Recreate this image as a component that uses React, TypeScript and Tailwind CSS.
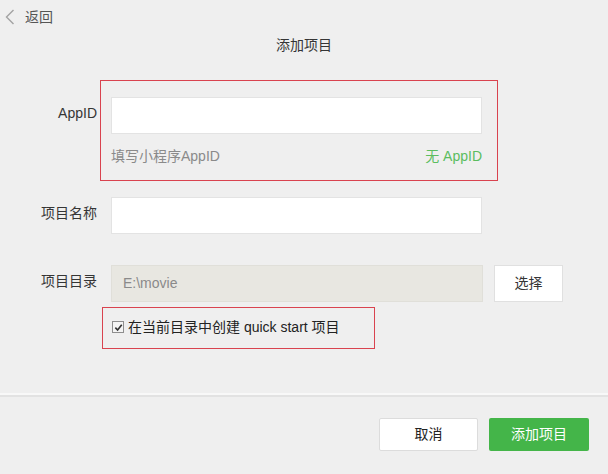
const font = "font-['Liberation_Sans','Noto_Sans_CJK_SC',sans-serif]";

function Field({ label, children }: { label: string; children: React.ReactNode }) {
  return (
    <div className="flex items-start">
      <div className="w-[97px] shrink-0 pt-[6px] text-right text-[14px] leading-[20px] text-[#353535]">
        {label}
      </div>
      <div className="ml-[14px]">{children}</div>
    </div>
  );
}

export default function App() {
  return (
    <div className={`w-[608px] h-[474px] bg-[#efefef] flex flex-col ${font}`}>
      {/* Back */}
      <div className="h-[34px] flex items-center pl-[5px]">
        <svg viewBox="0 0 10 16" className="w-[10px] h-[16px]">
          <path d="M8.5 1 L1.5 8 L8.5 15" fill="none" stroke="#a3a3a3" strokeWidth="1.4" />
        </svg>
        <span className="ml-[10px] text-[14px] leading-[20px] text-[#555]">返回</span>
      </div>

      {/* Title */}
      <div className="h-[22px] text-center text-[14px] leading-[22px] text-[#353535]">添加项目</div>

      {/* AppID */}
      <div className="mt-[41px]">
        <Field label="AppID">
          <div className="relative w-[371px]">
            <div className="absolute -left-[11px] -top-[17px] -right-[16px] -bottom-[15px] border border-[#d9434f]" />
            <div className="h-[37px] bg-white border border-[#e3e3e3]" />
            <div className="mt-[12px] flex justify-between text-[14px] leading-[20px]">
              <span className="text-[#8a8a8a]">填写小程序AppID</span>
              <span className="text-[#5bbd5f]">无 AppID</span>
            </div>
          </div>
        </Field>
      </div>

      {/* Name */}
      <div className="mt-[31px]">
        <Field label="项目名称">
          <div className="w-[371px] h-[37px] bg-white border border-[#e3e3e3]" />
        </Field>
      </div>

      {/* Directory */}
      <div className="mt-[31px]">
        <Field label="项目目录">
          <div className="flex items-start gap-[11px]">
            <div className="w-[372px] h-[37px] bg-[#e8e7e1] border border-[#e0dfd9] pl-[11px] flex items-center text-[14px] text-[#8a8a8a]">
              E:\movie
            </div>
            <button className="w-[69px] h-[37px] bg-white border border-[#e0e0e0] text-[14px] text-[#353535]">
              选择
            </button>
          </div>
          <div className="relative mt-[15px] flex items-center h-[20px]">
            <div className="absolute -left-[9px] -top-[10px] w-[273px] h-[42px] border border-[#d9434f]" />
            <span className="ml-[1px] w-[12px] h-[12px] border border-[#8e8e8e] bg-[#f4f4f4] flex items-center justify-center">
              <svg viewBox="0 0 10 10" className="w-[9px] h-[9px]">
                <path d="M1.5 5.2 L4 7.8 L8.6 2" fill="none" stroke="#333" strokeWidth="1.8" />
              </svg>
            </span>
            <span className="ml-[4px] text-[14px] leading-[20px] text-[#222]">
              在当前目录中创建 quick start 项目
            </span>
          </div>
        </Field>
      </div>

      {/* Divider */}
      <div className="mt-[56px]">
        <div className="h-[2px] bg-[#f8f8f8]" />
        <div className="h-[2px] bg-[#e2e2e2]" />
      </div>

      {/* Footer */}
      <div className="mt-[21px] flex justify-end gap-[11px] pr-[19px]">
        <button className="w-[99px] h-[33px] bg-white border border-[#dcdcdc] rounded-[2px] text-[14px] text-[#222]">
          取消
        </button>
        <button className="w-[100px] h-[33px] bg-[#44b549] rounded-[2px] text-[14px] text-white">
          添加项目
        </button>
      </div>
    </div>
  );
}
